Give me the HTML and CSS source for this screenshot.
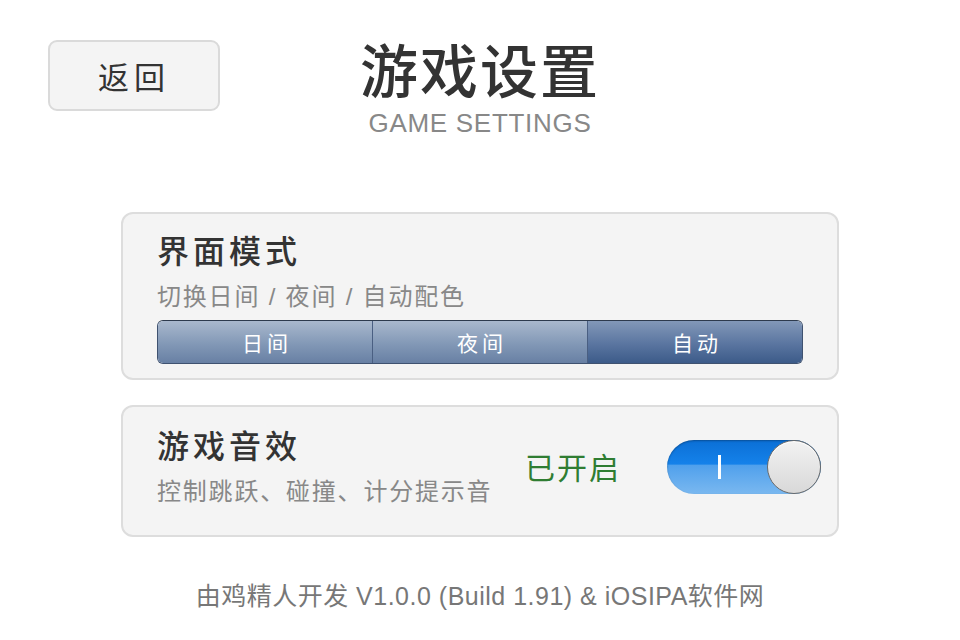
FILE: index.html
```html
<!DOCTYPE html>
<html lang="zh-CN">

<head>
    <meta charset="UTF-8">
    <meta name="viewport" content="width=device-width, initial-scale=1.0">
    <title>游戏设置</title>
    <link rel="stylesheet" href="styles.css">
</head>

<body>
    <header class="top">
        <div class="top-left">
            <button class="back-btn">返回</button>
        </div>
        <div class="title-wrap">
            <h1>游戏设置</h1>
            <p class="subtitle">GAME SETTINGS</p>
        </div>
        <div></div>
    </header>

    <main class="settings">
        <section class="card">
            <h2>界面模式</h2>
            <p class="desc">切换日间 / 夜间 / 自动配色</p>
            <div class="segmented">
                <button class="seg">日间</button>
                <button class="seg">夜间</button>
                <button class="seg active">自动</button>
            </div>
        </section>

        <section class="card card-row">
            <div class="card-text">
                <h2>游戏音效</h2>
                <p class="desc">控制跳跃、碰撞、计分提示音</p>
            </div>
            <span class="status">已开启</span>
            <div class="switch on">
                <span class="switch-mark"></span>
                <span class="knob"></span>
            </div>
        </section>
    </main>

    <footer class="credits">由鸡精人开发 V1.0.0 (Build 1.91) &amp; iOSIPA软件网</footer>
</body>

</html>
```

FILE: styles.css
```css
:root {
    --card-bg: #f4f4f4;
    --card-border: #dddddd;
    --text-dark: #333333;
    --text-muted: #888888;
    --green: #2f7d32;
    --font-family: "Liberation Sans", "Noto Sans CJK SC", sans-serif;
}

body {
    margin: 0;
    padding: 0;
    width: 960px;
    height: 640px;
    background: #ffffff;
    font-family: var(--font-family);
    color: var(--text-dark);
    overflow: hidden;
}

.top {
    display: grid;
    grid-template-columns: 1fr auto 1fr;
    padding-top: 38px;
}

.top-left {
    padding: 2px 0 0 48px;
}

.back-btn {
    width: 172px;
    height: 71px;
    background: #f4f4f4;
    border: 2px solid #dadada;
    border-radius: 9px;
    font-family: var(--font-family);
    font-size: 31px;
    letter-spacing: 5px;
    color: var(--text-dark);
    cursor: pointer;
    padding: 0;
}

.title-wrap {
    text-align: center;
}

.title-wrap h1 {
    margin: 0;
    font-size: 58px;
    font-weight: 500;
    line-height: 70px;
    letter-spacing: 2px;
    color: #333;
}

.subtitle {
    margin: 0;
    font-size: 26px;
    line-height: 30px;
    letter-spacing: 0.7px;
    color: var(--text-muted);
}

.settings {
    width: 718px;
    margin: 74px auto 0;
    display: flex;
    flex-direction: column;
    gap: 25px;
}

.card {
    box-sizing: border-box;
    background: var(--card-bg);
    border: 2px solid var(--card-border);
    border-radius: 12px;
    padding: 16px 34px 14px;
}

.card h2 {
    margin: 0;
    font-size: 32px;
    font-weight: 500;
    line-height: 44px;
    letter-spacing: 4px;
    color: var(--text-dark);
}

.desc {
    margin: 6px 0 6px;
    font-size: 24px;
    line-height: 34px;
    letter-spacing: 1.8px;
    color: var(--text-muted);
}

.segmented {
    display: flex;
    height: 44px;
    box-sizing: border-box;
    border: 1px solid #3f5270;
    border-top-color: #2d3a4d;
    border-radius: 6px;
    overflow: hidden;
}

.seg {
    flex: 1;
    border: none;
    border-right: 1px solid #4a5f82;
    background: linear-gradient(#a9b8cd, #8298b6 55%, #6880a4);
    color: #ffffff;
    font-family: var(--font-family);
    font-size: 21px;
    letter-spacing: 4px;
    padding: 0 0 0 4px;
    cursor: pointer;
}

.seg:last-child {
    border-right: none;
}

.seg.active {
    background: linear-gradient(#8298b8, #5a75a0 55%, #3c5b89);
}

.card-row {
    display: flex;
    align-items: center;
    padding: 18px 16px 26px 34px;
}

.card-text {
    flex: 1;
}

.card-row .desc {
    margin: 6px 0 0;
}

.status {
    font-size: 30px;
    color: var(--green);
    letter-spacing: 2px;
    margin: -2px 46px 0 0;
}

.switch {
    position: relative;
    width: 154px;
    height: 54px;
    border-radius: 27px;
    background: linear-gradient(#0b6fd6, #1582ea 45%, #4fa0ec 46%, #7ab8f0);
    box-shadow: inset 0 1px 2px rgba(0, 0, 0, 0.3);
}

.switch-mark {
    position: absolute;
    left: 51px;
    top: 15px;
    width: 3px;
    height: 24px;
    background: #ffffff;
}

.knob {
    position: absolute;
    right: 0;
    top: 0;
    width: 52px;
    height: 52px;
    border-radius: 50%;
    border: 1px solid #6a6a6a;
    background: linear-gradient(#f2f2f2, #d8d8d8);
    box-shadow: inset 0 1px 1px #ffffff;
}

.credits {
    margin-top: 44px;
    text-align: center;
    font-size: 25px;
    line-height: 30px;
    letter-spacing: 0.5px;
    color: #777777;
}
```
